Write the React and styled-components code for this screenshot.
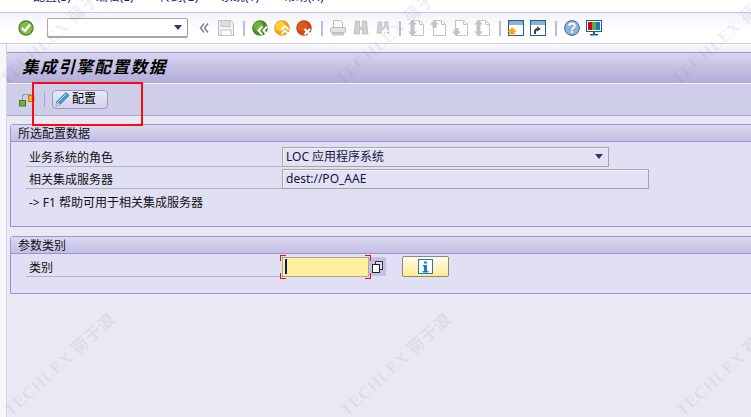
import React from "react";
import styled, { createGlobalStyle } from "styled-components";

const Global = createGlobalStyle`
  html, body { margin: 0; padding: 0; background: #e9e9f6; }
  body { font-family: "Noto Sans", "Noto Sans CJK SC", sans-serif; }
`;
const CJK = `"Noto Sans", "Noto Sans CJK SC", sans-serif`;

const Page = styled.div`
  position: relative; width: 751px; height: 417px; overflow: hidden; background: #e9e9f6;
`;
const MenuBar = styled.nav`
  height: 12px; background: #fff; overflow: hidden; display: flex; align-items: flex-end;
  padding: 0 0 8px 33px; box-sizing: border-box;
`;
const MenuItem = styled.span`
  width: 62.7px; flex: none; font: 12px/14px ${CJK}; color: #1a1f78; white-space: nowrap;
`;
const Toolbar = styled.div`
  height: 32px; box-sizing: border-box; display: flex; align-items: center; padding: 0 0 0 18px;
  border-top: 1px solid #c8c4dc; border-bottom: 1px solid #d0cde0;
  background: linear-gradient(#f3f2fa, #ffffff 60%);
`;
const Slot = styled.span`
  display: inline-flex; flex: none; width: ${p => p.$w || 16}px; height: 16px; margin-right: ${p => p.$mr || 0}px;
  svg { display: block; }
`;
const Sep = styled.span`
  flex: none; width: 2px; height: 15px; background: #bdb9e2; margin: 0 7px 0 9px;
`;
const Combo = styled.div`
  position: relative; width: 141px; height: 20px; box-sizing: border-box; flex: none;
  margin: 0 11px 0 13px; background: #fff; border: 1px solid #a8a8ac; border-radius: 2px;
  border-right-color: #9a9a9e; border-bottom-width: 2px;
`;
const ArrowDown = styled.span`
  position: absolute; right: ${p => p.$r}px; top: ${p => p.$t}px; width: 0; height: 0;
  border-left: 4px solid transparent; border-right: 4px solid transparent; border-top: 5px solid #3d2b78;
`;
const Workspace = styled.div`display: flex; height: 373px;`;
const Rail = styled.div`
  flex: none; width: 6px; background: #f6f6fb; border-right: 1px solid #d6d4e6;
`;
const Main = styled.main`flex: 1; min-width: 0;`;
const Strip = styled.div`height: 8px; background: linear-gradient(#fbfbfe, #eeecf7);`;
const TitleBar = styled.header`
  height: 31px; box-sizing: border-box; border-top: 1px solid #9c96c6; padding: 3px 0 0 15px;
  background: linear-gradient(#d8d4ee, #b1abd8);
`;
const TitleText = styled.h1`
  margin: 0; font: italic 700 16.6px/22px ${CJK}; letter-spacing: 1.5px; color: #000;
`;
const AppBar = styled.div`
  height: 33px; box-sizing: border-box; border-top: 1px solid #f0f0fa; border-bottom: 1px solid #a9a5cf;
  background: #cfcee9; display: flex; align-items: center; padding: 0 0 1px 12px;
`;
const AppSep = styled.span`
  flex: none; width: 1px; height: 15px; background: #aaa6d2; margin: 0 7px 0 9px;
`;
const ConfigButton = styled.button`
  display: flex; align-items: center; gap: 1px; width: 56px; height: 19px; padding: 0 0 0 2px;
  box-sizing: border-box; border: 1px solid #9c98c6; border-radius: 4px;
  background: linear-gradient(#e9e8f6, #d3d2ec); font: 12px/16px ${CJK}; color: #000;
  span { margin-left: 1px; }
`;
const Content = styled.div`padding: 8px 0 0 3px; margin-right: -6px;`;
const Group = styled.section`
  box-sizing: border-box; border: 1px solid #9a94d4; border-radius: 3px 0 0 0; background: #e0dff3;
  margin-bottom: 9px;
`;
const GroupHead = styled.h2`
  margin: 0; height: 17px; box-sizing: border-box; padding: 1px 0 0 7px; border-bottom: 1px solid #9a94d4;
  background: linear-gradient(#dcdaf1, #c2bee6); font: 400 12px/16px ${CJK}; color: #111;
`;
const GroupBody = styled.div`
  height: ${p => p.$h}px; box-sizing: border-box; padding: ${p => p.$pt}px 0 0 15px;
`;
const Row = styled.div`display: flex; margin-bottom: 2px; align-items: flex-start;`;
const Label = styled.label`
  flex: none; width: 256px; height: 20px; box-sizing: border-box; padding: 4px 0 0 3px;
  border-bottom: 1px solid #b4b4bc; font: 12px/14px ${CJK}; color: #111;
`;
const Field = styled.div`
  position: relative; flex: none; width: ${p => p.$w}px; height: 20px; box-sizing: border-box;
  padding-left: 3px; background: #e3e2f4; border: 1px solid #a6a6aa; border-top-width: 1px;
  box-shadow: inset 1px 1px 0 #f2f2fa; font: 12px/17px ${CJK}; color: #14143c;
`;
const Help = styled.p`
  margin: 6px 0 0 3px; font: 12px/16px ${CJK}; color: #111;
`;
const InputWrap = styled.div`
  position: relative; flex: none; width: 87px; height: 20px; box-sizing: border-box;
  background: #fff0a0; border: 1px solid #b0aa80;
`;
const Caret = styled.span`
  position: absolute; left: 2px; top: 1px; width: 2px; height: 15px; background: #0c1a6c;
`;
const Corner = styled.span`
  position: absolute; width: 5px; height: 5px;
  ${p => (p.$top ? "top: -3px; border-top: 1px solid #e8141c;" : "bottom: -3px; border-bottom: 1px solid #e8141c;")}
  ${p => (p.$left ? "left: -3px; border-left: 1px solid #e8141c;" : "right: -3px; border-right: 1px solid #e8141c;")}
`;
const SearchHelp = styled.div`
  flex: none; width: 17px; height: 19px; background: #c4c1e6; display: flex; align-items: center; justify-content: center;
`;
const InfoButton = styled.button`
  flex: none; width: 47px; height: 21px; margin: -1px 0 0 16px; padding: 0; display: flex;
  align-items: center; justify-content: center; box-sizing: border-box; border: 1px solid #8c8a70;
  border-radius: 2px; background: linear-gradient(#fffdf0, #ffea90);
`;
const RedFrame = styled.div`
  position: absolute; left: 32px; top: 82px; width: 111px; height: 44px; box-sizing: border-box;
  border: 2px solid #fb0a10; pointer-events: none;
`;
const Watermark = styled.div`
  position: absolute; transform: translate(-50%, -50%) rotate(-42deg); white-space: nowrap;
  font: 700 17px/20px "Liberation Serif", "Noto Sans CJK SC", serif; letter-spacing: 0.5px;
  color: rgba(130, 130, 145, 0.13); pointer-events: none;
`;

const Check = () => (
  <svg width="16" height="16" viewBox="0 0 16 16">
    <circle cx="8" cy="8" r="7.7" fill="#4c8a2e" /><circle cx="8" cy="8" r="6.3" fill="#86bb4c" />
    <path d="M4 8l3 3 5-6.5" fill="none" stroke="#fff" strokeWidth="2.3" />
  </svg>
);
const Rewind = () => (
  <svg width="10" height="16" viewBox="0 0 10 16">
    <path d="M5 3.5L1.5 8 5 12.5M9 3.5L5.5 8 9 12.5" fill="none" stroke="#808080" strokeWidth="1.5" />
  </svg>
);
const Save = () => (
  <svg width="16" height="16" viewBox="0 0 16 16">
    <path d="M.5.5h12l3 3v12H.5z" fill="#f4f4f6" stroke="#bcbcbc" />
    <rect x="3" y=".5" width="9" height="6" fill="#dedede" stroke="#c4c4c4" />
    <rect x="3" y="10" width="10" height="5.5" fill="#fff" stroke="#c4c4c4" />
  </svg>
);
const Round = ({ a, b, children }) => (
  <svg width="16" height="16" viewBox="0 0 16 16">
    <circle cx="8" cy="8" r="7.8" fill={a} /><circle cx="6.5" cy="6.5" r="5" fill={b} />
    {children}
  </svg>
);
const Back = () => (
  <Round a="#3f8a25" b="#74b041">
    <path d="M10 6.500L6.500 10.500l3.500 4M15 6.500l-3.500 4 3.500 4" fill="none" stroke="#fff" strokeWidth="2" />
  </Round>
);
const Exit = () => (
  <Round a="#f2a214" b="#ffcf3c">
    <path d="M7.500 9.500l3.500-3.500 3.500 3.500M7.500 14l3.500-3.500 3.500 3.500" fill="none" stroke="#fff" strokeWidth="1.900" />
  </Round>
);
const Cancel = () => (
  <Round a="#cc4a12" b="#d85a1c">
    <path d="M8.500 9l5.500 5.500M14 9l-5.500 5.500" fill="none" stroke="#fff" strokeWidth="2.300" />
  </Round>
);
const Print = () => (
  <svg width="16" height="16" viewBox="0 0 16 16">
    <path d="M3.500.5h7l2 2v5h-9z" fill="#fafafa" stroke="#c0c0c0" />
    <rect x=".5" y="7.500" width="15" height="5" rx="1.500" fill="#e4e4e4" stroke="#bcbcbc" />
    <rect x="2" y="13" width="12" height="2.500" fill="#c8c8c8" />
  </svg>
);
const Find = ({ plus }) => (
  <svg width="16" height="16" viewBox="0 0 16 16">
    <path d="M2.500 1h4v6h3V1h4l1.500 13h-5.500V9.500h-3V14H1z" fill="#d0d0d0" stroke="#bdbdbd" strokeWidth=".8" />
    {plus && <path d="M11 8v7M7.500 11.500h7" stroke="#fff" strokeWidth="2.400" />}
  </svg>
);
const PageArrow = ({ up, down }) => (
  <svg width="16" height="16" viewBox="0 0 16 16">
    <path d="M3.500.5h8l4 4v11h-12z" fill="#fff" stroke="#c4c4c4" />
    <path d="M11.500.5v4h4" fill="none" stroke="#c4c4c4" />
    {up && <path d="M4.500 0L9 4.500H6.500V8h-4V4.500H0z" fill="#c4c4c4" />}
    {down && <path d="M4.500 16L9 11.500H6.500V8h-4v3.500H0z" fill="#c4c4c4" />}
  </svg>
);
const WinNew = () => (
  <svg width="16" height="16" viewBox="0 0 16 16">
    <rect x=".5" y=".5" width="15" height="15" fill="#fff" stroke="#1c6090" />
    <rect x="1" y="1" width="14" height="4" fill="#8eb0d4" />
    <circle cx="4" cy="11.500" r="3" fill="#ffab10" />
    <path d="M4 7v9M0 11.500h8M1 8.500l6 6M7 8.500l-6 6" stroke="#ffab10" strokeWidth="1" />
  </svg>
);
const WinLink = () => (
  <svg width="16" height="16" viewBox="0 0 16 16">
    <rect x=".5" y=".5" width="15" height="15" fill="#fff" stroke="#1c6090" />
    <rect x="1" y="1" width="14" height="4" fill="#8eb0d4" />
    <path d="M5 14v-2.500q0-2.500 3-2.500" fill="none" stroke="#404040" strokeWidth="2" />
    <path d="M7 6.500l4 2.500-4 2.500z" fill="#404040" />
  </svg>
);
const HelpIcon = () => (
  <svg width="16" height="16" viewBox="0 0 16 16">
    <circle cx="8" cy="8" r="7.400" fill="#8db3d6" stroke="#2f6ea4" />
    <path d="M5.200 6q0-2.500 2.800-2.500t2.800 2.300q0 1.500-1.500 2.200T8 10" fill="none" stroke="#fff" strokeWidth="1.800" />
    <rect x="7" y="11" width="2" height="2" fill="#fff" />
  </svg>
);
const Monitor = () => (
  <svg width="16" height="16" viewBox="0 0 16 16">
    <rect x=".5" y=".5" width="15" height="11" fill="#fff" stroke="#1c6090" />
    <rect x="2" y="2" width="4" height="8" fill="#c80a0a" /><rect x="6" y="2" width="4" height="8" fill="#6aa83a" /><rect x="10" y="2" width="4" height="8" fill="#1e78c0" />
    <path d="M7 12h2v2H7zM4 14h8v1.500H4z" fill="#1c6090" />
  </svg>
);
const Transport = () => (
  <svg width="16" height="16" viewBox="0 0 16 16">
    <rect x=".5" y="9.500" width="6" height="5.500" fill="#74b041" stroke="#3f7a25" />
    <rect x="9.500" y="4.500" width="5.500" height="6" fill="#ffb020" stroke="#d07a10" />
    <path d="M3.500 9V3.500h8V4" fill="none" stroke="#808080" strokeDasharray="2 1" />
  </svg>
);
const Pencil = () => (
  <svg width="15" height="16" viewBox="0 0 15 16">
    <path d="M1 15l1-4.500L11 1.500l3 3-9 9z" fill="#4a9ad0" stroke="#2a6a9c" strokeWidth=".8" />
    <path d="M3.500 10.500L11 3" stroke="#bfe0f4" strokeWidth="1" />
    <path d="M1 15l1-4 3 3z" fill="#eed8a8" />
  </svg>
);
const Copies = () => (
  <svg width="11" height="12" viewBox="0 0 11 12">
    <rect x="3.500" y=".5" width="7" height="8" fill="#ddd" stroke="#333" />
    <rect x=".5" y="3.500" width="7" height="8" fill="#fff" stroke="#222" />
  </svg>
);
const Info = () => (
  <svg width="15" height="15" viewBox="0 0 15 15">
    <rect x=".5" y=".5" width="14" height="14" fill="#fff" stroke="#1a80bc" />
    <path d="M6 2.500h3v2H6zM5 6h4v6h1.500v1.500h-6V12H6V7.500H5z" fill="#1a80bc" />
  </svg>
);

const menus = ["配置(S)", "编辑(E)", "转到(G)", "系统(Y)", "帮助(H)"];
const marks = [[56, 34], [392, 34], [728, 34], [60, 365], [396, 365], [732, 365]];

export default function App() {
  return (
    <Page>
      <Global />
      <MenuBar>{menus.map(m => <MenuItem key={m}>{m}</MenuItem>)}</MenuBar>
      <Toolbar>
        <Slot><Check /></Slot>
        <Combo><ArrowDown $r={5} $t={6} /></Combo>
        <Slot $w={10} $mr={9}><Rewind /></Slot>
        <Slot><Save /></Slot>
        <Sep />
        <Slot $mr={6}><Back /></Slot><Slot $mr={6}><Exit /></Slot><Slot><Cancel /></Slot>
        <Sep />
        <Slot $mr={7}><Print /></Slot><Slot $mr={7}><Find /></Slot><Slot $w={14}><Find plus /></Slot>
        <Sep />
        <Slot $mr={6}><PageArrow up down /></Slot><Slot $mr={6}><PageArrow up /></Slot><Slot $mr={6}><PageArrow down /></Slot><Slot><PageArrow up down /></Slot>
        <Sep />
        <Slot $mr={6}><WinNew /></Slot><Slot><WinLink /></Slot>
        <Sep />
        <Slot $mr={6}><HelpIcon /></Slot><Slot><Monitor /></Slot>
      </Toolbar>
      <Workspace>
        <Rail />
        <Main>
          <Strip />
          <TitleBar><TitleText>集成引擎配置数据</TitleText></TitleBar>
          <AppBar>
            <Slot><Transport /></Slot>
            <AppSep />
            <ConfigButton><Pencil /><span>配置</span></ConfigButton>
          </AppBar>
          <Content>
            <Group>
              <GroupHead>所选配置数据</GroupHead>
              <GroupBody $h={84} $pt={5}>
                <Row>
                  <Label>业务系统的角色</Label>
                  <Field $w={327}>LOC 应用程序系统<ArrowDown $r={5} $t={6} /></Field>
                </Row>
                <Row>
                  <Label>相关集成服务器</Label>
                  <Field $w={367}>dest://PO_AAE</Field>
                </Row>
                <Help>-&gt; F1 帮助可用于相关集成服务器</Help>
              </GroupBody>
            </Group>
            <Group>
              <GroupHead>参数类别</GroupHead>
              <GroupBody $h={39} $pt={3}>
                <Row>
                  <Label>类别</Label>
                  <InputWrap>
                    <Caret />
                    <Corner $top $left /><Corner $top /><Corner $left /><Corner />
                  </InputWrap>
                  <SearchHelp><Copies /></SearchHelp>
                  <InfoButton><Info /></InfoButton>
                </Row>
              </GroupBody>
            </Group>
          </Content>
        </Main>
      </Workspace>
      <RedFrame />
      {marks.map(([x, y]) => (
        <Watermark key={`${x}-${y}`} style={{ left: x, top: y }}>TECHLEX 荷于浪</Watermark>
      ))}
    </Page>
  );
}
